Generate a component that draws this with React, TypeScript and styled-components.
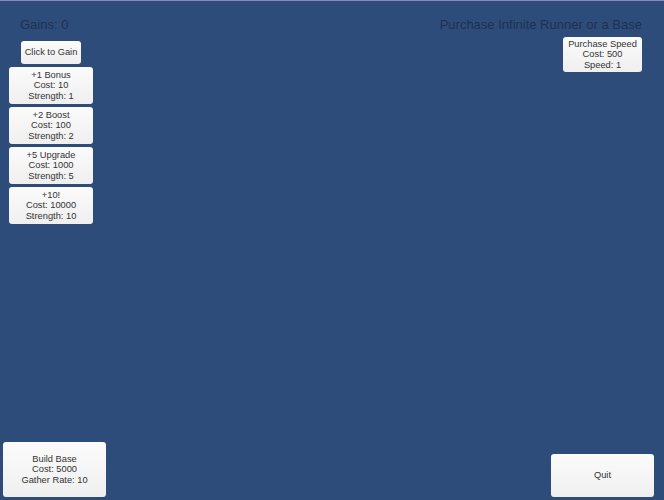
import React from "react";
import styled, { createGlobalStyle } from "styled-components";

const GlobalStyle = createGlobalStyle`
  html, body {
    margin: 0;
    padding: 0;
    background: #2e4c7a;
  }
`;

const Screen = styled.div`
  box-sizing: border-box;
  width: 664px;
  height: 500px;
  display: flex;
  flex-direction: column;
  justify-content: space-between;
  background: #2e4c7a;
  border-top: 1px solid #8c86b8;
  font-family: "Liberation Sans", Arial, sans-serif;
  overflow: hidden;
`;

const TopRow = styled.div`
  display: flex;
  justify-content: space-between;
  align-items: flex-start;
  padding: 0 22px 0 9px;
`;

const LeftColumn = styled.div`
  width: 84px;
  display: flex;
  flex-direction: column;
  align-items: center;
`;

const RightColumn = styled.div`
  display: flex;
  flex-direction: column;
  align-items: flex-end;
`;

const Heading = styled.div<{ $indent?: number }>`
  align-self: ${(p) => (p.$indent !== undefined ? "flex-start" : "flex-end")};
  margin: 16px 0 ${(p) => (p.$indent !== undefined ? 8 : 4)}px ${(p) => p.$indent ?? 0}px;
  font-size: 13px;
  line-height: 16px;
  color: #1d3154;
  white-space: nowrap;
`;

const Button = styled.button<{ $w: number; $h: number }>`
  box-sizing: border-box;
  width: ${(p) => p.$w}px;
  height: ${(p) => p.$h}px;
  margin: 0 0 3px;
  padding: 0;
  display: flex;
  flex-direction: column;
  align-items: center;
  justify-content: center;
  border: none;
  border-radius: 3px;
  background: linear-gradient(#fbfbfb, #efefef);
  font-family: inherit;
  font-size: 9.3px;
  line-height: 10.5px;
  color: #333;
  cursor: pointer;
`;

const BottomRow = styled.div`
  display: flex;
  justify-content: space-between;
  align-items: flex-end;
  padding: 0 10px 0 3px;
`;

const upgrades = [
  { name: "+1 Bonus", cost: 10, strength: 1 },
  { name: "+2 Boost", cost: 100, strength: 2 },
  { name: "+5 Upgrade", cost: 1000, strength: 5 },
  { name: "+10!", cost: 10000, strength: 10 },
];

const App: React.FC = () => {
  return (
    <Screen>
      <GlobalStyle />
      <TopRow>
        <LeftColumn>
          <Heading $indent={11}>Gains: 0</Heading>
          <Button $w={60} $h={23}>Click to Gain</Button>
          {upgrades.map((u) => (
            <Button key={u.name} $w={84} $h={37}>
              <span>{u.name}</span>
              <span>Cost: {u.cost}</span>
              <span>Strength: {u.strength}</span>
            </Button>
          ))}
        </LeftColumn>
        <RightColumn>
          <Heading>Purchase Infinite Runner or a Base</Heading>
          <Button $w={79} $h={35}>
            <span>Purchase Speed</span>
            <span>Cost: 500</span>
            <span>Speed: 1</span>
          </Button>
        </RightColumn>
      </TopRow>
      <BottomRow>
        <Button $w={103} $h={55}>
          <span>Build Base</span>
          <span>Cost: 5000</span>
          <span>Gather Rate: 10</span>
        </Button>
        <Button $w={103} $h={43}>Quit</Button>
      </BottomRow>
    </Screen>
  );
};

export default App;
